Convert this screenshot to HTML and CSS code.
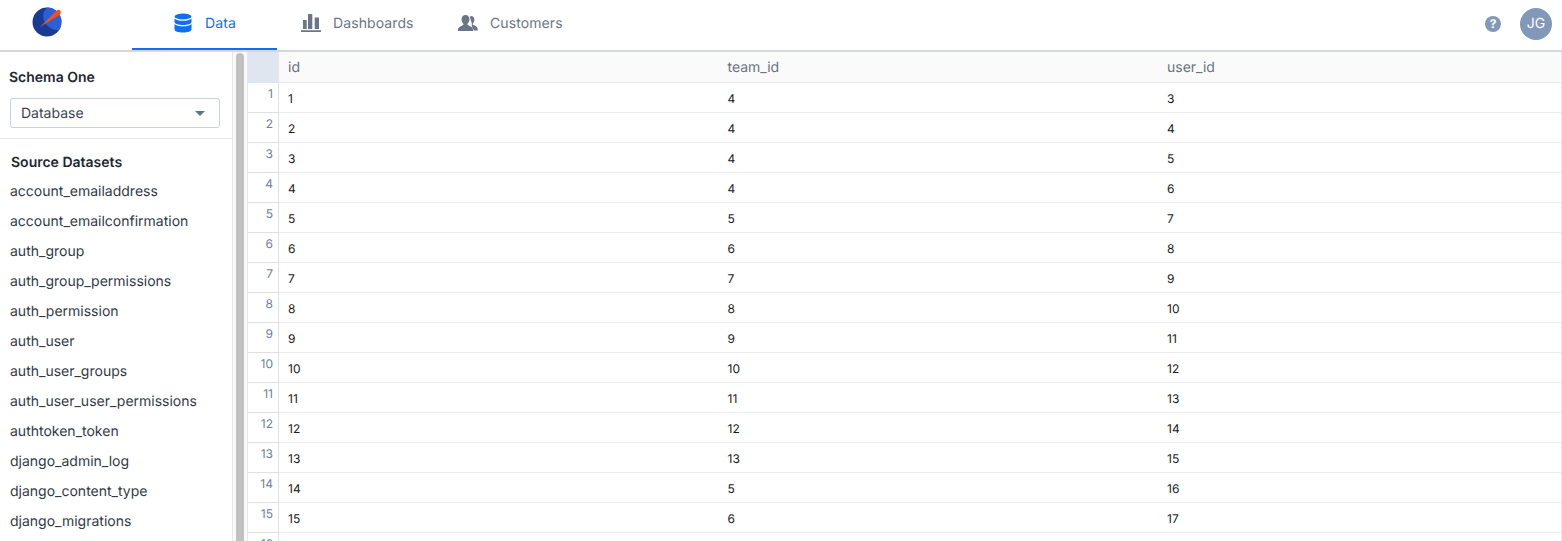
FILE: index.html
```html
<!DOCTYPE html>
<html lang="en">
<head>
<meta charset="utf-8">
<title>Data</title>
<link rel="stylesheet" href="styles.css">
</head>
<body>
<header class="topbar">
  <div class="logo">
    <svg width="30" height="30" viewBox="0 0 30 30">
      <circle cx="15" cy="15" r="14.500" fill="#1b3a94"/>
      <path d="M15 .5A14.500 14.500 0 0 1 29.500 15 14 14 0 0 1 27 23 15 15 0 0 1 11 8 12 12 0 0 1 15 .5Z" fill="#2a5fd6"/>
      <path d="M8 20 24.500 3.500 Q27 2 28.500 4 Q29.500 6 27.500 8Z" fill="#ef4f23"/>
    </svg>
  </div>
  <nav class="tabs">
    <a class="tab active">
      <svg class="tab-icon" width="18" height="20" viewBox="0 0 18 20"><ellipse cx="9" cy="3.500" rx="8.500" ry="3" fill="currentColor"/><path d="M.5 5.500v3.500c0 1.700 3.800 3 8.500 3s8.500-1.300 8.500-3V5.500c-1.500 1.400-4.700 2.300-8.500 2.300S2 6.900.5 5.500Z" fill="currentColor"/><path d="M.5 11v5.500c0 1.700 3.800 3 8.500 3s8.500-1.300 8.500-3V11c-1.500 1.400-4.700 2.300-8.500 2.300S2 12.400.5 11Z" fill="currentColor"/></svg>
      <span>Data</span>
    </a>
    <a class="tab">
      <svg class="tab-icon" width="20" height="18" viewBox="0 0 20 18"><path d="M2 6h3.700v9H2ZM7 0h4.300v15H7ZM13.700 3.500H18V15h-4.300ZM0 16.300h20V18H0Z" fill="currentColor"/></svg>
      <span>Dashboards</span>
    </a>
    <a class="tab">
      <svg class="tab-icon" width="20" height="18" viewBox="0 0 20 18"><path d="M13 2c2.300 0 3.600 1.800 3.400 4-.2 1.600-.9 2.800-1.600 3.500v1.300c1.800.7 4.300 1.500 4.800 3.400.1.500.2 1.100.2 2.300h-6v-7l-2-6.500Z" fill="currentColor"/><path d="M7.500 1C10 1 11.500 3 11.500 5.300c0 1.800-.9 3.400-1.900 4.300V11c2 .8 5.400 2.100 5.400 4.500V17H0v-1.500C0 13.100 3.400 11.800 5.400 11V9.600C4.400 8.700 3.500 7.100 3.500 5.300 3.500 3 5 1 7.500 1Z" fill="currentColor" stroke="#fff" stroke-width=".9" paint-order="stroke"/></svg>
      <span>Customers</span>
    </a>
  </nav>
  <div class="actions">
    <span class="help">?</span>
    <span class="avatar">JG</span>
  </div>
</header>
<main class="body">
  <aside class="sidebar">
    <div class="schema">
      <h2 class="schema-title">Schema One</h2>
      <div class="select"><span>Database</span><i class="caret"></i></div>
    </div>
    <div class="sources">
      <h3 class="sources-title">Source Datasets</h3>
      <ul class="dataset-list">
        <li>account_emailaddress</li>
        <li>account_emailconfirmation</li>
        <li>auth_group</li>
        <li>auth_group_permissions</li>
        <li>auth_permission</li>
        <li>auth_user</li>
        <li>auth_user_groups</li>
        <li>auth_user_user_permissions</li>
        <li>authtoken_token</li>
        <li>django_admin_log</li>
        <li>django_content_type</li>
        <li>django_migrations</li>
      </ul>
    </div>
  </aside>
  <div class="scrollbar"><div class="thumb"></div></div>
  <section class="grid">
    <div class="corner"></div><div class="th">id</div><div class="th">team_id</div><div class="th">user_id</div>
    <div class="rn">1</div><div class="td">1</div><div class="td">4</div><div class="td">3</div>
    <div class="rn">2</div><div class="td">2</div><div class="td">4</div><div class="td">4</div>
    <div class="rn">3</div><div class="td">3</div><div class="td">4</div><div class="td">5</div>
    <div class="rn">4</div><div class="td">4</div><div class="td">4</div><div class="td">6</div>
    <div class="rn">5</div><div class="td">5</div><div class="td">5</div><div class="td">7</div>
    <div class="rn">6</div><div class="td">6</div><div class="td">6</div><div class="td">8</div>
    <div class="rn">7</div><div class="td">7</div><div class="td">7</div><div class="td">9</div>
    <div class="rn">8</div><div class="td">8</div><div class="td">8</div><div class="td">10</div>
    <div class="rn">9</div><div class="td">9</div><div class="td">9</div><div class="td">11</div>
    <div class="rn">10</div><div class="td">10</div><div class="td">10</div><div class="td">12</div>
    <div class="rn">11</div><div class="td">11</div><div class="td">11</div><div class="td">13</div>
    <div class="rn">12</div><div class="td">12</div><div class="td">12</div><div class="td">14</div>
    <div class="rn">13</div><div class="td">13</div><div class="td">13</div><div class="td">15</div>
    <div class="rn">14</div><div class="td">14</div><div class="td">5</div><div class="td">16</div>
    <div class="rn">15</div><div class="td">15</div><div class="td">6</div><div class="td">17</div>
    <div class="rn tail">16</div><div class="td tail"></div><div class="td tail"></div><div class="td tail"></div>
  </section>
</main>
</body>
</html>
```
FILE: styles.css
```css
* { box-sizing: border-box; }
html, body { margin: 0; height: 100%; overflow: hidden; }
body { font-family: Inter, "Liberation Sans", sans-serif; text-rendering: geometricPrecision; background: #fff; color: #1f2937; width: 1562px; height: 541px; display: flex; flex-direction: column; }

.topbar { height: 52px; flex: none; display: flex; align-items: stretch; border-bottom: 2px solid #d3d8df; }
.logo { width: 132px; padding: 7px 0 0 32px; flex: none; }
.logo svg { display: block; }
.tabs { display: flex; flex: 1; }
.tab { display: flex; align-items: center; height: 50px; padding-bottom: 4px; color: #6b7587; font-size: 14px; letter-spacing: .1px; width: 157px; padding-left: 24px; gap: 12px; }
.tab:first-child { width: 145px; padding-left: 42px; gap: 13px; }
.tab.active { color: #0f6fec; border-bottom: 2px solid #0f6fec; height: 50px; padding-bottom: 2px; }
.tab-icon { flex: none; display: block; }
.actions { display: flex; align-items: flex-start; gap: 19px; padding: 8px 10px 0 0; }
.help { margin-top: 8px; width: 16px; height: 16px; border-radius: 50%; background: #8298b8; color: #fff; font-size: 12px; font-weight: 700; line-height: 16px; text-align: center; }
.avatar { width: 32px; height: 32px; border-radius: 50%; background: #8298b8; color: #fff; font-size: 14px; line-height: 32px; text-align: center; }

.body { flex: 1; display: flex; min-height: 0; }
.sidebar { width: 233px; flex: none; border-right: 1px solid #e5e7eb; overflow: hidden; }
.schema { padding: 17px 12px 10px 9px; height: 87px; border-bottom: 1px solid #e5e7eb; }
.schema-title { margin: 0 0 12px; font-size: 14px; line-height: 17px; font-weight: 600; color: #1f2733; }
.select { margin-left: 1px; height: 30px; display: flex; align-items: center; justify-content: space-between; padding: 0 14px 0 10px; border: 1px solid #c6d0de; border-radius: 3px; font-size: 14px; color: #3b4351; }
.caret { width: 0; height: 0; border-left: 5px solid transparent; border-right: 5px solid transparent; border-top: 5px solid #5f708a; }
.sources { padding: 15px 0 0 10px; }
.sources-title { margin: 0 0 0 1px; font-size: 14px; line-height: 17px; font-weight: 600; color: #1f2733; }
.dataset-list { list-style: none; margin: 6px 0 0; padding: 0; font-size: 14px; color: #323a46; }
.dataset-list li { height: 30px; line-height: 30px; }

.scrollbar { width: 15px; flex: none; padding: 1px 3px 0 3px; background: #fafafa; border-right: 1px solid #e8e8e8; }
.thumb { width: 8px; height: 100%; background: #c1c1c1; border-radius: 4px 4px 0 0; }

.grid { flex: 1; display: grid; grid-template-columns: 31px 439.500px 439.500px 1fr; grid-template-rows: 31px; grid-auto-rows: 30px; align-content: start; overflow: hidden; border-right: 1px solid #e5e7eb; }
.corner { background: #dfe6f0; border-right: 1px solid #e5e7eb; }
.th { background: #fafafa; border-bottom: 1px solid #e8e8e8; padding: 0 0 0 9px; font-size: 14px; line-height: 31px; color: #6b7280; }
.rn { border-right: 1px solid #e0e0e0; border-bottom: 1px solid #e0e0e0; font-size: 12px; color: #6f8098; text-align: right; padding: 4px 5px 0 0; line-height: 14px; }
.td { border-bottom: 1px solid #ececec; padding: 8px 0 0 9px; font-size: 12px; line-height: 15px; color: #1a1a1a; }
.tail { height: 8px; border-bottom: 0; }
.rn.tail { height: 8px; overflow: hidden; }
```
